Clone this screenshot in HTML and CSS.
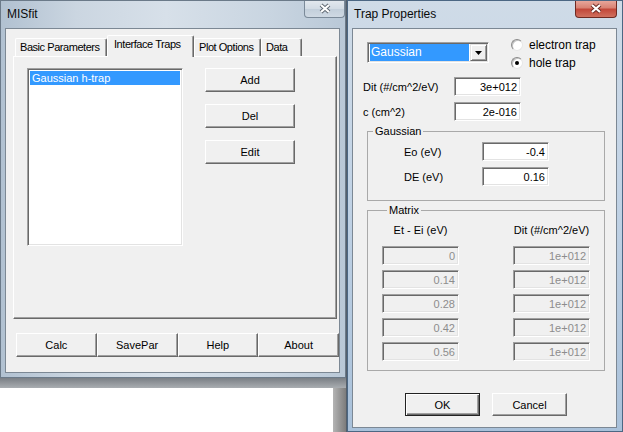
FILE: index.html
```html
<!DOCTYPE html>
<html>
<head>
<meta charset="utf-8">
<title>MISfit</title>
<link rel="stylesheet" href="styles.css">
</head>
<body>
<div class="desktop">
  <div class="leftcol">
    <div class="window inactive main">
      <div class="titlebar">
        <span class="title">MISfit</span>
        <span class="closebtn gray">
          <svg width="12" height="11" viewBox="0 0 12 11"><path d="M2 2 L10 9 M10 2 L2 9" stroke="#5d6670" stroke-width="4" fill="none"/><path d="M2 2 L10 9 M10 2 L2 9" stroke="#ffffff" stroke-width="2.2" fill="none"/></svg>
        </span>
      </div>
      <div class="client main-client">
        <div class="tabs">
          <div class="tab t1">Basic Parameters</div>
          <div class="tab t2 selected">Interface Traps</div>
          <div class="tab t3">Plot Options</div>
          <div class="tab t4">Data</div>
        </div>
        <div class="tabpanel">
          <div class="listbox"><div class="listitem sel">Gaussian h-trap</div></div>
          <div class="sidebtns">
            <button class="btn side">Add</button>
            <button class="btn side">Del</button>
            <button class="btn side">Edit</button>
          </div>
        </div>
        <div class="cmdrow">
          <button class="btn cmd">Calc</button>
          <button class="btn cmd">SavePar</button>
          <button class="btn cmd">Help</button>
          <button class="btn cmd">About</button>
        </div>
      </div>
    </div>
    <div class="below">
      <div class="band"></div>
      <div class="belowrow"><div class="paper"></div><div class="shade"></div></div>
    </div>
  </div>

  <div class="window active dialog">
    <div class="titlebar">
      <span class="title">Trap Properties</span>
      <span class="closebtn red">
        <svg width="12" height="11" viewBox="0 0 12 11"><path d="M2 2 L10 9 M10 2 L2 9" stroke="#6a2a24" stroke-width="4" fill="none"/><path d="M2 2 L10 9 M10 2 L2 9" stroke="#ffffff" stroke-width="2.2" fill="none"/></svg>
      </span>
    </div>
    <div class="client dlg-client">
      <div class="toprow">
        <div class="combo">
          <span class="combo-text">Gaussian</span>
          <span class="combo-btn"><svg width="7" height="4" viewBox="0 0 7 4"><polygon points="0,0 7,0 3.5,4" fill="#000"/></svg></span>
        </div>
        <div class="radios">
          <div class="radio"><span class="rcircle"></span><span>electron trap</span></div>
          <div class="radio"><span class="rcircle checked"></span><span>hole trap</span></div>
        </div>
      </div>
      <div class="field f-dit"><span class="flabel">Dit (#/cm^2/eV)</span><span class="edit">3e+012</span></div>
      <div class="field f-c"><span class="flabel">c (cm^2)</span><span class="edit">2e-016</span></div>
      <fieldset class="group gauss">
        <legend>Gaussian</legend>
        <div class="gfield"><span class="glabel">Eo (eV)</span><span class="edit">-0.4</span></div>
        <div class="gfield"><span class="glabel">DE (eV)</span><span class="edit">0.16</span></div>
      </fieldset>
      <fieldset class="group matrix">
        <legend>Matrix</legend>
        <div class="mgrid">
          <div class="mhead">Et - Ei (eV)</div><div class="mhead">Dit (#/cm^2/eV)</div>
          <span class="edit disabled">0</span><span class="edit disabled">1e+012</span>
          <span class="edit disabled">0.14</span><span class="edit disabled">1e+012</span>
          <span class="edit disabled">0.28</span><span class="edit disabled">1e+012</span>
          <span class="edit disabled">0.42</span><span class="edit disabled">1e+012</span>
          <span class="edit disabled">0.56</span><span class="edit disabled">1e+012</span>
        </div>
      </fieldset>
      <div class="okrow">
        <button class="btn dlgbtn default">OK</button>
        <button class="btn dlgbtn">Cancel</button>
      </div>
    </div>
  </div>
</div>
</body>
</html>
```

FILE: styles.css
```css
* { box-sizing: border-box; }
html, body { margin: 0; padding: 0; }
body {
  width: 623px;
  height: 432px;
  overflow: hidden;
  font-family: "Liberation Sans", Arial, sans-serif;
  font-size: 11px;
  color: #000;
  background: #55606c;
}
.desktop {
  display: flex;
  align-items: flex-start;
  width: 623px;
  height: 432px;
  background: #55606c;
}
.leftcol {
  width: 346px;
  display: flex;
  flex-direction: column;
}

/* windows */
.window {
  display: flex;
  flex-direction: column;
  border: 1px solid;
  padding: 0 5px 5px 4px;
  overflow: hidden;
}
.window.inactive {
  background: linear-gradient(to right, #b1c1d1 0%, #cbd6e1 22%, #d7e0e9 48%, #c9d5e1 78%, #b9c8d7 100%);
  border-color: #6b7a89;
}
.window.active {
  background: linear-gradient(to bottom, #cfdbe7 0%, #c3d4e6 40%, #a9c1da 100%);
  border-color: #4c6783;
}
.main { width: 346px; height: 378px; }
.dialog { width: 276px; height: 432px; margin-left: 1px; padding-bottom: 3px; }

.titlebar {
  height: 27px;
  display: flex;
  justify-content: space-between;
  align-items: flex-start;
  flex: none;
}
.title {
  font-size: 12px;
  line-height: 15px;
  padding: 6px 0 0 2px;
  color: #0b0b0b;
}
.closebtn {
  margin-top: -1px;
  height: 18px;
  display: flex;
  align-items: center;
  justify-content: center;
  border: 1px solid;
  border-top: none;
  border-radius: 0 0 4px 4px;
}
.closebtn.gray {
  width: 41px;
  margin-right: -5px;
  border-color: #7b8a99;
  background: linear-gradient(to bottom, #e4e9ef 0%, #d3dce5 50%, #c3cfdb 55%, #cfd9e3 100%);
}
.closebtn.red {
  width: 42px;
  margin-right: 0;
  border-color: #6f2a22;
  background: linear-gradient(to bottom, #e9aba0 0%, #d98374 45%, #c2483a 55%, #d0705e 100%);
}

.client {
  background: #f0f0f0;
  border: 1px solid #7c8894;
  display: flex;
  flex-direction: column;
  flex: none;
}
.main-client { width: 335px; height: 345px; }
.dlg-client { width: 265px; height: 400px; }

/* tabs */
.tabs {
  display: flex;
  align-items: flex-end;
  height: 21px;
  margin: 6px 0 0 9px;
}
.tab {
  height: 18px;
  background: #f0f0f0;
  border-top: 1px solid #fff;
  border-left: 1px solid #fff;
  border-right: 1px solid #696969;
  box-shadow: inset -1px 0 0 #a0a0a0;
  border-radius: 2px 2px 0 0;
  line-height: 16px;
  padding-left: 4px;
  white-space: nowrap;
  letter-spacing: -0.45px;
  overflow: hidden;
}
.tab.selected {
  height: 22px;
  margin-bottom: -1px;
  position: relative;
  z-index: 1;
  line-height: 17px;
  padding-left: 6px;
}
.t1 { width: 92px; }
.t2 { width: 87px; }
.t3 { width: 67px; }
.t4 { width: 41px; }

.tabpanel {
  width: 324px;
  height: 263px;
  margin-left: 7px;
  border: 1px solid;
  border-color: #fff #696969 #696969 #fff;
  box-shadow: inset -1px -1px 0 #a0a0a0;
  padding: 11px 0 0 13px;
  display: flex;
  align-items: flex-start;
}
.listbox {
  width: 156px;
  height: 178px;
  background: #fff;
  border: 1px solid;
  border-color: #a0a0a0 #fff #fff #a0a0a0;
  box-shadow: inset 1px 1px 0 #696969, inset -1px -1px 0 #e3e3e3;
  padding: 2px 2px 0 2px;
}
.listitem {
  height: 14px;
  line-height: 14px;
  padding-left: 2px;
}
.listitem.sel { background: #3399ff; color: #fff; }

.sidebtns {
  margin-left: 22px;
  display: flex;
  flex-direction: column;
  gap: 12px;
}

/* buttons */
.btn {
  font-family: inherit;
  font-size: 11px;
  color: #000;
  background: #f0f0f0;
  border: 1px solid;
  border-color: #fff #696969 #696969 #fff;
  box-shadow: inset -1px -1px 0 #a0a0a0;
  padding: 0;
  margin: 0;
  border-radius: 0;
}
.side { width: 90px; height: 24px; }
.cmdrow {
  display: flex;
  margin: 14px 0 0 10px;
}
.cmd { width: 81px; height: 24px; }
.dlgbtn { width: 75px; height: 23px; }
.btn.default {
  border: 1px solid #222;
  box-shadow: inset 1px 1px 0 #fff, inset -1px -1px 0 #696969, inset -2px -2px 0 #a0a0a0;
}

/* bottom-left area */
.below {
  height: 54px;
  display: flex;
  flex-direction: column;
}
.band {
  height: 10px;
  background: linear-gradient(to bottom, #7a7f85, #a9adb1);
}
.belowrow { flex: 1; display: flex; }
.paper { width: 333px; background: #fff; }
.shade { flex: 1; background: linear-gradient(to right, #b4b4b4, #7c7c7c); }

/* dialog content */
.toprow {
  display: flex;
  align-items: flex-start;
  height: 43px;
}
.combo {
  margin: 13px 0 0 14px;
  width: 122px;
  height: 21px;
  display: flex;
  background: #fff;
  border: 1px solid;
  border-color: #a0a0a0 #fff #fff #a0a0a0;
  box-shadow: inset 1px 1px 0 #696969, inset -1px -1px 0 #e3e3e3;
  padding: 1px 1px 1px 2px;
}
.combo-text {
  flex: 1;
  background: #3399ff;
  color: #fff;
  line-height: 17px;
  padding-left: 1px;
  margin-right: 1px;
  font-size: 12px;
}
.combo-btn {
  width: 17px;
  height: 17px;
  background: #f0f0f0;
  border: 1px solid;
  border-color: #e3e3e3 #696969 #696969 #e3e3e3;
  box-shadow: inset 1px 1px 0 #fff, inset -1px -1px 0 #a0a0a0;
  display: flex;
  align-items: center;
  justify-content: center;
}
.radios {
  margin: 7px 0 0 22px;
  display: flex;
  flex-direction: column;
}
.radio {
  height: 18px;
  display: flex;
  align-items: center;
  gap: 6px;
  font-size: 12px;
}
.rcircle {
  width: 12px;
  height: 12px;
  border-radius: 50%;
  background: #fff;
  border: 1px solid;
  border-color: #8a8a8a #e6e6e6 #e6e6e6 #8a8a8a;
  box-shadow: inset 1px 1px 0 #c4c4c4;
  display: flex;
  align-items: center;
  justify-content: center;
}
.rcircle.checked::after {
  content: "";
  width: 4px;
  height: 4px;
  border-radius: 50%;
  background: #000;
}

.field {
  display: flex;
  align-items: center;
  padding-left: 10px;
}
.f-dit { margin-top: 5px; }
.f-c { margin-top: 6px; }
.flabel { width: 91px; }
.field .edit { width: 67px; }

.edit {
  display: flex;
  align-items: center;
  justify-content: flex-end;
  height: 19px;
  padding: 0 3px 0 2px;
  background: #fff;
  border: 1px solid;
  border-color: #a0a0a0 #fff #fff #a0a0a0;
  box-shadow: inset 1px 1px 0 #696969, inset -1px -1px 0 #e3e3e3;
  white-space: nowrap;
}
.edit.disabled {
  background: #f0f0f0;
  color: #8d8d8d;
}

.group {
  margin: 0 0 0 14px;
  width: 238px;
  border: 1px solid #a9a9a9;
  padding: 0;
  min-width: 0;
}
.group legend {
  margin-left: 5px;
  padding: 0 2px;
  line-height: 13px;
  height: 13px;
}
.gauss { margin-top: 4px; padding: 4px 0 14px 0; }
.gfield {
  display: flex;
  align-items: center;
  padding-left: 36px;
}
.gfield + .gfield { margin-top: 6px; }
.glabel { width: 78px; }
.gfield .edit { width: 67px; }

.matrix { margin-top: 3px; padding: 7px 0 9px 14px; }
.mgrid {
  display: grid;
  grid-template-columns: 77px 77px;
  column-gap: 54px;
  row-gap: 5px;
}
.mhead {
  text-align: center;
  line-height: 13px;
  margin-bottom: 4px;
  white-space: nowrap;
}

.okrow {
  display: flex;
  gap: 12px;
  margin: 22px 0 0 52px;
}
```
